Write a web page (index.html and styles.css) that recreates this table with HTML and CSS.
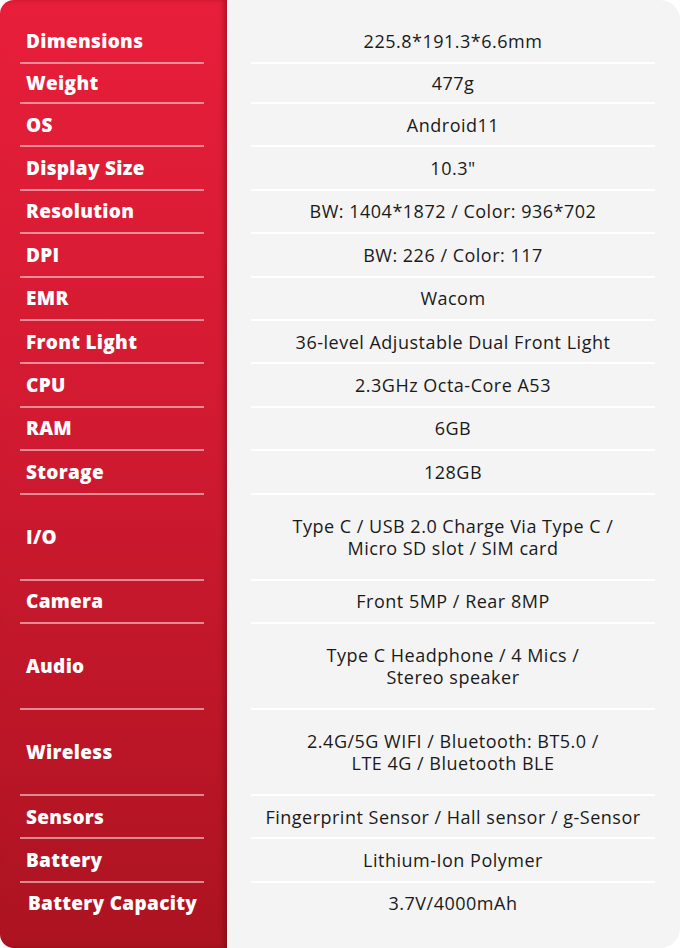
FILE: index.html
```html
<!DOCTYPE html>
<html lang="en">
<head>
<meta charset="utf-8">
<title>Specifications</title>
<link rel="stylesheet" href="styles.css">
</head>
<body>
<div class="sheet">
  <div class="col labels">
    <div class="row first">Dimensions</div>
    <div class="row short">Weight</div>
    <div class="row">OS</div>
    <div class="row">Display Size</div>
    <div class="row">Resolution</div>
    <div class="row">DPI</div>
    <div class="row">EMR</div>
    <div class="row">Front Light</div>
    <div class="row">CPU</div>
    <div class="row">RAM</div>
    <div class="row">Storage</div>
    <div class="row double">I/O</div>
    <div class="row">Camera</div>
    <div class="row double">Audio</div>
    <div class="row double">Wireless</div>
    <div class="row">Sensors</div>
    <div class="row">Battery</div>
    <div class="row last indent">Battery Capacity</div>
  </div>
  <div class="col values">
    <div class="row first">225.8*191.3*6.6mm</div>
    <div class="row short">477g</div>
    <div class="row">Android11</div>
    <div class="row">10.3"</div>
    <div class="row">BW: 1404*1872 / Color: 936*702</div>
    <div class="row">BW: 226 / Color: 117</div>
    <div class="row">Wacom</div>
    <div class="row">36-level Adjustable Dual Front Light</div>
    <div class="row">2.3GHz Octa-Core A53</div>
    <div class="row">6GB</div>
    <div class="row">128GB</div>
    <div class="row double">Type C / USB 2.0 Charge Via Type C /<br>Micro SD slot / SIM card</div>
    <div class="row">Front 5MP / Rear 8MP</div>
    <div class="row double">Type C Headphone / 4 Mics /<br>Stereo speaker</div>
    <div class="row double">2.4G/5G WIFI / Bluetooth: BT5.0 /<br>LTE 4G / Bluetooth BLE</div>
    <div class="row">Fingerprint Sensor / Hall sensor / g-Sensor</div>
    <div class="row">Lithium-Ion Polymer</div>
    <div class="row last">3.7V/4000mAh</div>
  </div>
</div>
</body>
</html>
```

FILE: styles.css
```css
html, body {
  margin: 0;
  padding: 0;
  background: #ffffff;
}

.sheet {
  width: 680px;
  height: 948px;
  display: flex;
  overflow: hidden;
}

.col {
  display: flex;
  flex-direction: column;
  padding-top: 20px;
  box-sizing: border-box;
}

.labels {
  width: 227px;
  flex: none;
  padding-left: 20px;
  padding-right: 23px;
  background: linear-gradient(180deg, #e81e3a 0%, #d11a31 45%, #ac1320 100%);
  border-radius: 14px 0 0 14px;
  box-shadow: inset -4px 0 5px -1px rgba(60, 0, 8, 0.35);
  color: #ffffff;
  font-family: "Open Sans", "DejaVu Sans", sans-serif;
  font-weight: 800;
  font-size: 19px;
}

.values {
  flex: 1;
  margin-left: 1px;
  padding-left: 23px;
  padding-right: 25px;
  background: #f4f4f4;
  border-radius: 0 20px 20px 0;
  color: #1a1a1a;
  font-family: "Open Sans", "DejaVu Sans", sans-serif;
  font-weight: 400;
  font-size: 18px;
  letter-spacing: 0.5px;
  line-height: 22px;
}

.row {
  height: 41.4px;
  flex: none;
  display: flex;
  align-items: center;
  border-bottom: 2px solid;
  box-sizing: content-box;
  white-space: nowrap;
}

.row.first { height: 42px; }
.row.short { height: 38px; }
.row.double { height: 84px; }
.row.last { border-bottom: none; }

.labels .row {
  padding-left: 6px;
  border-bottom-color: rgba(255, 255, 255, 0.5);
  letter-spacing: 0.3px;
}

.labels .row.indent { padding-left: 8px; }

.values .row {
  justify-content: center;
  text-align: center;
  border-bottom-color: #ffffff;
}
```
